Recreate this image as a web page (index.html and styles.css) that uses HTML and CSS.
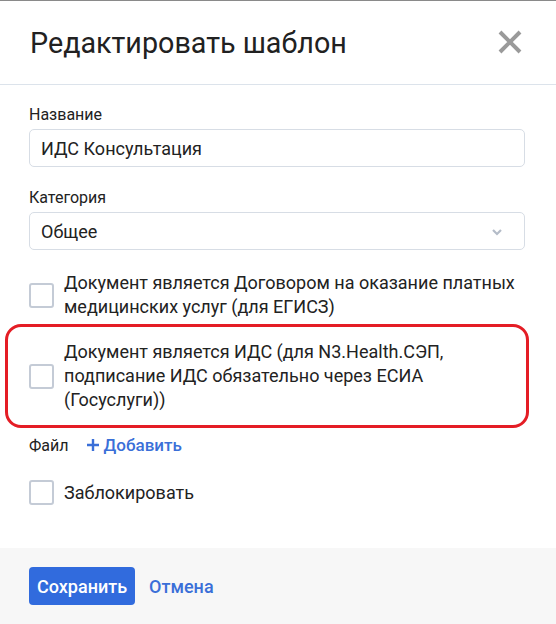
FILE: index.html
```html
<!DOCTYPE html>
<html lang="ru">
<head>
<meta charset="utf-8">
<title>Редактировать шаблон</title>
<link rel="stylesheet" href="styles.css">
</head>
<body>
<div class="modal">
  <div class="modal-header">
    <h1 class="modal-title">Редактировать шаблон</h1>
    <button class="close" type="button" aria-label="Закрыть">
      <svg width="26" height="24" viewBox="0 0 26 24"><path d="M3 2 L23 22 M23 2 L3 22" stroke="#9a9a9a" stroke-width="4" stroke-linecap="butt" fill="none"/></svg>
    </button>
  </div>
  <div class="modal-body">
    <div class="field">
      <label class="label">Название</label>
      <div class="input">ИДС Консультация</div>
    </div>
    <div class="field field-gap">
      <label class="label">Категория</label>
      <div class="input select">
        <span>Общее</span>
        <svg class="chevron" width="12" height="8" viewBox="0 0 12 8"><path d="M2 2 L6 6 L10 2" stroke="#b4bcc8" stroke-width="2.2" fill="none"/></svg>
      </div>
    </div>
    <div class="check check-first">
      <span class="box"></span>
      <span class="check-text">Документ является Договором на оказание платных медицинских услуг (для ЕГИСЗ)</span>
    </div>
    <div class="highlight">
      <div class="check">
        <span class="box"></span>
        <span class="check-text">Документ является ИДС (для N3.Health.СЭП, подписание ИДС обязательно через ЕСИА (Госуслуги))</span>
      </div>
    </div>
    <div class="file-row">
      <span class="file-label">Файл</span>
      <a class="add-link">
        <svg width="14" height="14" viewBox="0 0 14 14"><path d="M7 1 V13 M1 7 H13" stroke="#3a6fd8" stroke-width="2.4" fill="none"/></svg>
        Добавить
      </a>
    </div>
    <div class="check check-lock">
      <span class="box"></span>
      <span class="check-text">Заблокировать</span>
    </div>
  </div>
  <div class="modal-footer">
    <button class="btn-primary" type="button">Сохранить</button>
    <a class="btn-link">Отмена</a>
  </div>
</div>
</body>
</html>
```
FILE: styles.css
```css
* { box-sizing: border-box; }
html, body { margin: 0; padding: 0; background: #fff; }
body {
  font-family: Roboto, "Liberation Sans", Arial, sans-serif;
  color: #222;
}
.modal {
  width: 556px;
  height: 624px;
  display: flex;
  flex-direction: column;
  border-top: 1px solid #8a8a8a;
  background: #fff;
}
.modal-header {
  height: 84px;
  border-bottom: 1px solid #dce3eb;
  display: flex;
  align-items: flex-start;
  justify-content: space-between;
  padding: 24px 33px 0 30px;
}
.modal-title {
  margin: 0;
  font-size: 28.7px;
  font-weight: 400;
  line-height: 36px;
  color: #212121;
}
.close {
  border: 0;
  background: none;
  padding: 0;
  margin-top: 5px;
  width: 26px;
  height: 24px;
  cursor: pointer;
}
.close svg { display: block; }
.modal-body {
  flex: 1;
  padding: 20px 31px 0 29px;
}
.field { display: flex; flex-direction: column; }
.field-gap { margin-top: 21px; }
.label {
  font-size: 16px;
  line-height: 20px;
  margin-bottom: 4px;
  color: #222;
}
.input {
  height: 38px;
  border: 1px solid #d7dde5;
  border-radius: 5px;
  padding: 0 11px;
  display: flex;
  align-items: center;
  font-size: 18px;
  color: #222;
}
.select { justify-content: space-between; padding-right: 21px; }
.chevron { display: block; margin-top: 1px; }
.check {
  display: flex;
  align-items: center;
  gap: 10px;
}
.check-first { margin-top: 21px; }
.box {
  flex: none;
  width: 25px;
  height: 25px;
  border: 2px solid #c4cbd6;
  border-radius: 3px;
  background: #fff;
}
.check-text {
  font-size: 18px;
  line-height: 24px;
  color: #222;
}
.highlight {
  margin: 5px -4px 0 -24px;
  border: 3.5px solid #e41d25;
  border-radius: 16px;
  padding: 13px 16px 13px 21px;
}
.file-row {
  margin-top: 7px;
  display: flex;
  align-items: center;
  height: 20px;
  font-size: 16px;
}
.file-label { color: #222; margin-right: 17px; }
.add-link {
  display: flex;
  align-items: center;
  gap: 4px;
  color: #3a6fd8;
  font-size: 17px;
  font-weight: 500;
  cursor: pointer;
}
.check-lock { margin-top: 25px; }
.modal-footer {
  height: 76px;
  background: #f7f7f7;
  display: flex;
  align-items: center;
  padding: 0 30px 0 29px;
  gap: 14px;
}
.btn-primary {
  height: 38px;
  padding: 0 8px;
  border: 0;
  border-radius: 4px;
  background: #316bdd;
  color: #fff;
  font-family: inherit;
  font-size: 18px;
  font-weight: 500;
  cursor: pointer;
}
.btn-link {
  color: #3a6fd8;
  font-size: 18px;
  font-weight: 500;
  cursor: pointer;
}
```
